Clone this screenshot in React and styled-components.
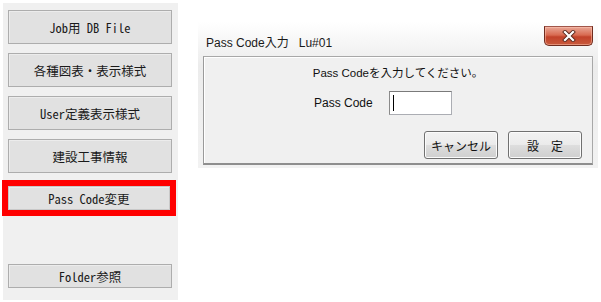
import React from 'react';
import styled, { createGlobalStyle } from 'styled-components';

const GlobalStyle = createGlobalStyle`
  html, body {
    margin: 0;
    padding: 0;
    background: #ffffff;
  }
  body {
    font-family: "Liberation Sans", "Noto Sans CJK JP", sans-serif;
  }
`;

const Page = styled.div`
  display: flex;
  align-items: flex-start;
  width: 601px;
  height: 302px;
  overflow: hidden;
`;

const SidePanel = styled.div`
  display: flex;
  flex-direction: column;
  gap: 9px;
  box-sizing: border-box;
  width: 175px;
  height: 297px;
  margin: 3px 0 0 3px;
  padding: 7px 6px 12px 5px;
  background: #f0f0f0;
`;

const MenuButton = styled.button`
  display: flex;
  align-items: center;
  justify-content: center;
  box-sizing: border-box;
  width: 164px;
  height: ${p => (p.$short ? '24px' : '34px')};
  margin-top: ${p => (p.$bottom ? 'auto' : '0')};
  padding: 0;
  background: #e1e1e1;
  border: 1px solid #adadad;
  box-shadow: inset 1px 1px 0 #ececec;
  font-family: "Noto Sans Mono CJK JP", "Liberation Mono", "Noto Sans CJK JP", monospace;
  font-size: 12.5px;
  font-weight: 400;
  color: #1a1a1a;
`;

const Highlight = styled.div`
  box-sizing: border-box;
  width: 174px;
  height: 36px;
  margin: -2px 0 0 -6px;
  border: 6px solid #ff0000;
  display: flex;

  ${MenuButton} {
    width: 100%;
    height: 100%;
    border-color: #c8c8c8;
  }
`;

const Window = styled.div`
  display: flex;
  flex-direction: column;
  box-sizing: border-box;
  width: 400px;
  height: 146px;
  margin: 22px 0 0 20px;
  background: linear-gradient(to bottom, #ffffff 0%, #ececec 30%, #f2f2f2 100%);
`;

const TitleBar = styled.div`
  display: flex;
  justify-content: space-between;
  height: 34px;
  padding-left: 8px;
  box-sizing: border-box;
`;

const Title = styled.span`
  align-self: center;
  margin-top: 4px;
  font-family: "Liberation Sans", "Noto Sans CJK JP", sans-serif;
  font-size: 12px;
  color: #1a1a1a;
  white-space: pre;
`;

const CloseButton = styled.div`
  display: flex;
  align-items: center;
  justify-content: center;
  box-sizing: border-box;
  width: 49px;
  height: 20px;
  margin: 4px 5px 0 0;
  border: 1px solid #6f2c1f;
  border-top-color: #a0564a;
  border-radius: 0 0 5px 5px;
  background: linear-gradient(to bottom, #e9a796 0%, #d86a50 45%, #c2422a 55%, #c85a3c 100%);
  box-shadow: inset 0 0 0 1px rgba(255, 200, 180, 0.5);
`;

const Client = styled.div`
  display: flex;
  flex-direction: column;
  flex: 1;
  margin: 0 5px 3px 5px;
  background: #f0f0f0;
  border: 1px solid #a8a8a8;
  border-left-color: #9a9a9a;
  border-bottom: 2px solid #8e8e8e;
  box-shadow: inset 1px 1px 0 #ffffff;
  font-family: "Liberation Sans", "Noto Sans CJK JP", sans-serif;
  font-size: 11.5px;
  color: #111;
`;

const Message = styled.div`
  margin-top: 8px;
  text-align: center;
  line-height: 16px;
`;

const FieldRow = styled.div`
  display: flex;
  align-items: center;
  gap: 16px;
  margin-top: 10px;
  padding-left: 110px;
`;

const Label = styled.span`
  font-size: 12px;
`;

const CodeInput = styled.div`
  position: relative;
  box-sizing: border-box;
  width: 63px;
  height: 24px;
  background: #ffffff;
  border: 1px solid #abadb3;
  border-top-color: #7a7a7a;
  border-left-color: #8a8a8a;
`;

const Caret = styled.div`
  position: absolute;
  left: 3px;
  top: 3px;
  width: 1px;
  height: 16px;
  background: #000;
`;

const ButtonRow = styled.div`
  display: flex;
  justify-content: flex-end;
  gap: 10px;
  margin-top: 16px;
  padding-right: 10px;
`;

const DialogButton = styled.button`
  box-sizing: border-box;
  width: 74px;
  height: 28px;
  padding: 0;
  border: 1px solid #707070;
  border-radius: 3px;
  background: linear-gradient(to bottom, #f2f2f2 0%, #ebebeb 48%, #dddddd 52%, #cfcfcf 100%);
  box-shadow: inset 0 0 0 1px #fbfbfb;
  font-family: "Noto Sans CJK JP", sans-serif;
  font-size: 12px;
  color: #111;
  white-space: pre;
`;

const menuItems = ['Job用 DB File', '各種図表・表示様式', 'User定義表示様式', '建設工事情報'];

export default function App() {
  return (
    <>
      <GlobalStyle />
      <Page>
        <SidePanel>
          {menuItems.map(label => (
            <MenuButton key={label}>{label}</MenuButton>
          ))}
          <Highlight>
            <MenuButton>Pass Code変更</MenuButton>
          </Highlight>
          <MenuButton $short $bottom>Folder参照</MenuButton>
        </SidePanel>

        <Window>
          <TitleBar>
            <Title>{'Pass Code入力   Lu#01'}</Title>
            <CloseButton>
              <svg width="14" height="12" viewBox="0 0 14 12">
                <path d="M3 2 L11 10 M11 2 L3 10" stroke="#5a2a20" strokeWidth="4" strokeLinecap="square" />
                <path d="M3 2 L11 10 M11 2 L3 10" stroke="#ffffff" strokeWidth="2.2" strokeLinecap="square" />
              </svg>
            </CloseButton>
          </TitleBar>
          <Client>
            <Message>Pass Codeを入力してください。</Message>
            <FieldRow>
              <Label>Pass Code</Label>
              <CodeInput>
                <Caret />
              </CodeInput>
            </FieldRow>
            <ButtonRow>
              <DialogButton>キャンセル</DialogButton>
              <DialogButton>{'設　定'}</DialogButton>
            </ButtonRow>
          </Client>
        </Window>
      </Page>
    </>
  );
}
